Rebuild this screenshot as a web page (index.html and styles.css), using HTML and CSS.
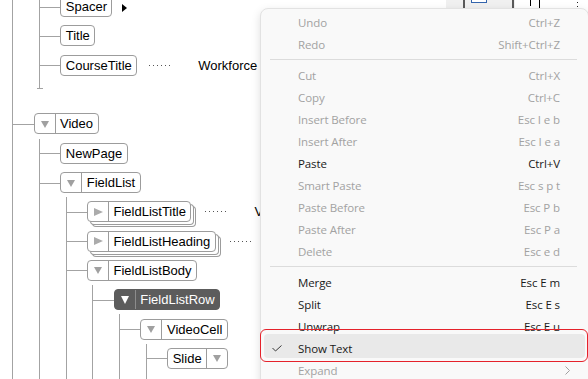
FILE: index.html
```html
<!DOCTYPE html>
<html>
<head>
<meta charset="utf-8">
<link rel="stylesheet" href="styles.css">
</head>
<body>
<div class="tree">
  <ul class="branch">
    <li>
      <div class="row"><span class="node"><span class="lbl">Header</span></span></div>
      <ul class="branch ends">
        <li><div class="row"><span class="node"><span class="lbl">Spacer</span></span><span class="expander"></span></div></li>
        <li><div class="row"><span class="node"><span class="lbl">Title</span></span></div></li>
        <li><div class="row"><span class="node"><span class="lbl">CourseTitle</span></span><span class="dots"></span><span class="value">Workforce</span></div></li>
      </ul>
    </li>
    <li>
      <div class="row"><span class="node"><span class="tog"><span class="down"></span></span><span class="lbl">Video</span></span></div>
      <ul class="branch">
        <li><div class="row"><span class="node"><span class="lbl">NewPage</span></span></div></li>
        <li>
          <div class="row"><span class="node"><span class="tog"><span class="down"></span></span><span class="lbl">FieldList</span></span></div>
          <ul class="branch">
            <li><div class="row"><span class="node stack"><span class="tog"><span class="right"></span></span><span class="lbl">FieldListTitle</span></span><span class="dots wide"></span><span class="value">Video</span></div></li>
            <li><div class="row"><span class="node stack"><span class="tog"><span class="right"></span></span><span class="lbl">FieldListHeading</span></span><span class="dots wide"></span></div></li>
            <li>
              <div class="row"><span class="node"><span class="tog"><span class="down"></span></span><span class="lbl">FieldListBody</span></span></div>
              <ul class="branch">
                <li>
                  <div class="row"><span class="node sel"><span class="tog"><span class="down"></span></span><span class="lbl">FieldListRow</span></span></div>
                  <ul class="branch">
                    <li>
                      <div class="row"><span class="node"><span class="tog"><span class="down"></span></span><span class="lbl">VideoCell</span></span></div>
                      <ul class="branch cont">
                        <li><div class="row"><span class="node"><span class="lbl">Slide</span><span class="tog after"><span class="down"></span></span></span></div></li>
                      </ul>
                    </li>
                  </ul>
                </li>
              </ul>
            </li>
          </ul>
        </li>
      </ul>
    </li>
  </ul>
</div>

<div class="toolbar">
  <span class="tb-btn"><span class="tb-icon"></span></span>
  <span class="caret c1"></span>
  <span class="caret c2"></span>
  <span class="colon"></span>
</div>

<div class="menu">
  <div class="mi off"><span></span><span>Undo</span><span class="key">Ctrl+Z</span></div>
  <div class="mi off"><span></span><span>Redo</span><span class="key">Shift+Ctrl+Z</span></div>
  <div class="sep"></div>
  <div class="mi off"><span></span><span>Cut</span><span class="key">Ctrl+X</span></div>
  <div class="mi off"><span></span><span>Copy</span><span class="key">Ctrl+C</span></div>
  <div class="mi off"><span></span><span>Insert Before</span><span class="key">Esc I e b</span></div>
  <div class="mi off"><span></span><span>Insert After</span><span class="key">Esc I e a</span></div>
  <div class="mi"><span></span><span>Paste</span><span class="key">Ctrl+V</span></div>
  <div class="mi off"><span></span><span>Smart Paste</span><span class="key">Esc s p t</span></div>
  <div class="mi off"><span></span><span>Paste Before</span><span class="key">Esc P b</span></div>
  <div class="mi off"><span></span><span>Paste After</span><span class="key">Esc P a</span></div>
  <div class="mi off"><span></span><span>Delete</span><span class="key">Esc e d</span></div>
  <div class="sep"></div>
  <div class="mi"><span></span><span>Merge</span><span class="key">Esc E m</span></div>
  <div class="mi"><span></span><span>Split</span><span class="key">Esc E s</span></div>
  <div class="mi"><span></span><span>Unwrap</span><span class="key">Esc E u</span></div>
  <div class="mi hover"><span class="check"><svg width="10" height="7" viewBox="0 0 10 7"><path d="M0.5 3 L3.5 6 L9.5 0.5" fill="none" stroke="#3a3a3a" stroke-width="1"/></svg></span><span>Show Text</span><span class="key"></span></div>
  <div class="mi off"><span></span><span>Expand</span><span class="key"></span><span class="sub"><svg width="5" height="9" viewBox="0 0 5 9"><path d="M0.5 0.5 L4.5 4.5 L0.5 8.5" fill="none" stroke="#a0a0a0" stroke-width="1"/></svg></span></div>
</div>

<div class="callout"></div>
</body>
</html>
```

FILE: styles.css
```css
* { box-sizing: border-box; }
html, body { margin: 0; padding: 0; }
body {
  width: 588px;
  height: 379px;
  overflow: hidden;
  position: relative;
  background: #fff;
  font-family: "Liberation Sans", Arial, sans-serif;
  font-size: 13px;
  color: #000;
}

/* ---------- tree ---------- */
.tree { margin-top: -37.3px; }
.branch {
  list-style: none;
  margin: 0;
  padding: 0;
  border-left: 1px solid #a3a3a3;
  position: relative;
}
.tree > .branch { margin-left: 12.2px; }
.branch .branch { margin-left: 5.4px; }
.branch > li { padding-left: 20.35px; }
.branch.cont { padding-bottom: 30px; }
.branch.ends { padding-bottom: 9px; margin-bottom: 20.32px; }
.branch.ends::after {
  content: "";
  position: absolute;
  left: -3px;
  bottom: 0;
  width: 6px;
  border-top: 1px solid #a3a3a3;
}
.row {
  height: 29.32px;
  display: flex;
  align-items: center;
  position: relative;
  white-space: nowrap;
}
.row::before {
  content: "";
  position: absolute;
  left: -21.35px;
  width: 21.35px;
  top: 50%;
  border-top: 1px solid #a3a3a3;
}
.node {
  display: inline-flex;
  align-items: stretch;
  height: 21px;
  border: 1px solid #9c9c9c;
  border-radius: 4px;
  background: #fff;
}
.node .lbl { padding: 0 4.5px; display: flex; align-items: center; }
.node .tog {
  width: 21px;
  display: flex;
  align-items: center;
  justify-content: center;
  border-right: 1px solid #9c9c9c;
}
.node .tog.after { border-right: 0; border-left: 1px solid #9c9c9c; }
.down {
  width: 0; height: 0;
  border-left: 4px solid transparent;
  border-right: 4px solid transparent;
  border-top: 7px solid #a0a0a0;
  margin-top: 1px;
}
.right {
  width: 0; height: 0;
  border-top: 4.5px solid transparent;
  border-bottom: 4.5px solid transparent;
  border-left: 9px solid #ababab;
}
.node.sel { background: #5c5c5c; border-color: #5c5c5c; color: #fff; }
.node.sel .tog { border-right-color: #8c8c8c; }
.node.sel .down {
  border-left-width: 4.5px;
  border-right-width: 4.5px;
  border-top: 8px solid #fff;
}
.node.stack {
  box-shadow: 3px 3px 0 -1px #fff, 3px 3px 0 0 #9c9c9c,
              5px 5px 0 -1px #fff, 5px 5px 0 0 #9c9c9c;
}
.expander {
  width: 0; height: 0;
  margin-left: 10px;
  margin-top: 2px;
  border-top: 4px solid transparent;
  border-bottom: 4px solid transparent;
  border-left: 5px solid #000;
}
.dots {
  width: 21px;
  height: 1px;
  margin-left: 12px;
  background: repeating-linear-gradient(90deg, #555 0 1px, transparent 1px 4px);
}
.dots.wide { margin-left: 14px; }
.value { margin-left: 28px; }

/* ---------- toolbar fragments above the menu ---------- */
.toolbar { position: absolute; left: 0; top: 0; width: 588px; height: 8px; }
.tb-btn {
  position: absolute;
  left: 446px; top: 0;
  width: 69px; height: 9px;
  background: #f0f0f0;
}
.tb-btn::before, .tb-btn::after {
  content: "";
  position: absolute;
  top: 0; bottom: 0;
  width: 2px;
  background: #5a5a5a;
}
.tb-btn::before { left: 17px; }
.tb-btn::after { left: 66px; }
.tb-icon {
  position: absolute;
  left: 25px; top: -10px;
  width: 16px; height: 13px;
  border: 1px solid #3465ad;
  background: #fff;
}
.caret { position: absolute; top: 0; width: 1px; background: #000; }
.c1 { left: 530px; height: 6px; }
.c2 { left: 539px; height: 8px; }
.colon {
  position: absolute;
  left: 577px; top: 2px;
  width: 1px; height: 5px;
  border-top: 1px solid #222;
  border-bottom: 1px solid #222;
}

/* ---------- context menu ---------- */
.menu {
  position: absolute;
  left: 260px;
  top: 8px;
  width: 329px;
  height: 400px;
  background: #f9f9f9;
  border: 1px solid #e2e2e2;
  border-radius: 8px;
  box-shadow: 0 3px 10px rgba(0, 0, 0, 0.13);
  padding-top: 2px;
  font-family: "Open Sans", "Noto Sans", sans-serif;
  font-size: 11.5px;
  letter-spacing: -0.1px;
  color: #1a1a1a;
  z-index: 10;
}
.mi {
  display: grid;
  grid-template-columns: 37px 1fr auto 28px;
  align-items: center;
  height: 22px;
  position: relative;
  white-space: nowrap;
}
.mi.off { color: #a2a2a2; }
.mi .key { text-align: right; }
.mi .check { display: flex; padding-left: 11px; }
.mi .sub { display: flex; padding-left: 5px; }
.mi.hover::before {
  content: "";
  position: absolute;
  left: 3px; right: 3px;
  top: -3px; bottom: 1px;
  background: #e9e9e9;
  border-radius: 4px;
  z-index: -1;
}
.sep {
  height: 9px;
  display: flex;
  align-items: center;
  padding: 0 11px 0 9px;
}
.sep::after { content: ""; flex: 1; height: 1px; background: #dcdcdc; }

.callout {
  position: absolute;
  left: 260px;
  top: 329px;
  width: 328px;
  height: 33px;
  border: 1.5px solid #e5222b;
  border-radius: 6px;
  z-index: 20;
}
```
